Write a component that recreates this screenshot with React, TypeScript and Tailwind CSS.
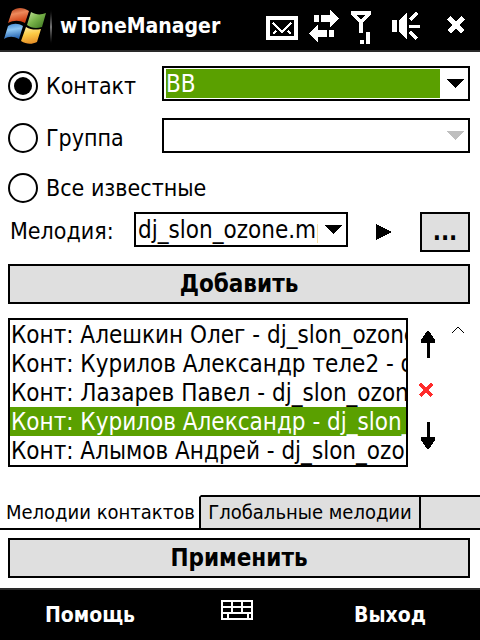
import { useState } from 'react';

const melodies = [
    'Конт: Алешкин Олег - dj_slon_ozone.mp3',
    'Конт: Курилов Александр теле2 - dj_slon_ozone.mp3',
    'Конт: Лазарев Павел - dj_slon_ozone.mp3',
    'Конт: Курилов Александр - dj_slon_ozone.mp3',
    'Конт: Алымов Андрей - dj_slon_ozone.mp3',
];

const targets = [
    { id: 'contact', label: 'Контакт' },
    { id: 'group', label: 'Группа' },
    { id: 'all', label: 'Все известные' },
];

const WindowsLogo: React.FC = () => (
    <svg width="44" height="38" viewBox="0 0 44 38" aria-hidden="true">
        <defs>
            <linearGradient id="red" x1="0" y1="0" x2="0.3" y2="1">
                <stop offset="0" stopColor="#a8320f" />
                <stop offset="0.45" stopColor="#ee8a5c" />
                <stop offset="1" stopColor="#cf3f12" />
            </linearGradient>
            <linearGradient id="green" x1="0" y1="0" x2="1" y2="1">
                <stop offset="0" stopColor="#c4e39b" />
                <stop offset="0.45" stopColor="#79b34a" />
                <stop offset="1" stopColor="#356f1b" />
            </linearGradient>
            <linearGradient id="blue" x1="0" y1="0" x2="0.2" y2="1">
                <stop offset="0" stopColor="#3f86cf" />
                <stop offset="0.45" stopColor="#8cc5f2" />
                <stop offset="1" stopColor="#2a68b3" />
            </linearGradient>
            <linearGradient id="yellow" x1="0" y1="0" x2="0.2" y2="1">
                <stop offset="0" stopColor="#fff2a8" />
                <stop offset="0.5" stopColor="#fccb45" />
                <stop offset="1" stopColor="#e8942a" />
            </linearGradient>
        </defs>
        <path d="M8 3 C13 -1 19 -1 25 3 L21 15 C15 12 10 12 4 15 Z" fill="url(#red)" />
        <path d="M27 4 C32 7 37 7 42 5 L38 19 C32 21 27 20 23 17 Z" fill="url(#green)" />
        <path d="M4 18 C9 15 14 15 19 18 L15 31 C9 28 5 28 0 31 Z" fill="url(#blue)" />
        <path d="M22 19 C27 22 32 22 37 21 L33 34 C27 37 22 36 17 33 Z" fill="url(#yellow)" />
    </svg>
);

const StatusIcons: React.FC = () => (
    <div className="flex gap-[11px] text-white">
        <svg width="32" height="50" fill="none" stroke="currentColor" shapeRendering="crispEdges" aria-label="Сообщения">
            <rect x="2" y="18" width="28" height="20" strokeWidth="4" />
            <path d="M7 23 L16 32 L25 23 M7 34 L10 31 M25 34 L22 31" strokeWidth="2" />
        </svg>
        <svg width="30" height="50" fill="currentColor" shapeRendering="crispEdges" aria-label="Передача данных">
            <path d="M5 15H10V22H5Z M12 15H21V10L30 18V19L21 27V22H12Z" />
            <path d="M20 30H25V37H20Z M18 30H9V25L0 33V34L9 42V37H18Z" />
        </svg>
        <svg width="31" height="50" fill="currentColor" shapeRendering="crispEdges" aria-label="Сигнал">
            <path fillRule="evenodd" d="M1 11H21V14L13 23V33H9V23L1 14Z M6 15L11 19L16 15Z" />
            <path d="M10 40H14V44H10Z M16 32H20V44H16Z" />
        </svg>
        <svg width="44" height="50" fill="currentColor" shapeRendering="crispEdges" aria-label="Звук">
            <path d="M0 20H5V32H0Z M7 20L15 13V39L7 32Z M17 25H28V28H17Z" />
            <path d="M18 20L25 13M18 32L25 39" stroke="currentColor" strokeWidth="3" />
        </svg>
    </div>
);

const UpArrow: React.FC = () => (
    <svg width="14" height="27" viewBox="0 0 14 27" shapeRendering="crispEdges" aria-hidden="true">
        <path d="M6 0H8L14 9V12H9V27H6V12H0V9Z" />
    </svg>
);

const Triangle: React.FC<{ className: string }> = ({ className }) => (
    <svg width="18" height="9" viewBox="0 0 18 9" className={className} fill="currentColor" shapeRendering="crispEdges" aria-hidden="true">
        <path d="M0 0H18L9 9Z" />
    </svg>
);

const App: React.FC = () => {
    const [target, setTarget] = useState('contact');
    const [selected, setSelected] = useState(melodies[3]);
    const [tab, setTab] = useState(0);

    return (
        <div className="min-h-screen flex flex-col bg-white text-black text-2xl/[29px] font-['DejaVu_Sans_Condensed','DejaVu_Sans',sans-serif] [font-stretch:condensed]">
            <header className="flex h-[52px] items-start border-b-2 border-[#2a2a2a] bg-black pl-1 pr-[15px]">
                <div className="mt-2 flex">
                    <WindowsLogo />
                    <span className="ml-[2px] h-[38px] w-[2px] bg-linear-to-b from-black via-[#777777] to-black" />
                </div>
                <h1 className="ml-2 flex-1 text-[21px]/[52px] font-bold text-white">wToneManager</h1>
                <StatusIcons />
                <button type="button" aria-label="Закрыть" className="ml-[11px] text-white">
                    <svg width="18" height="50" stroke="currentColor" strokeWidth="5" shapeRendering="crispEdges">
                        <path d="M2 18L16 32M16 18L2 32" />
                    </svg>
                </button>
            </header>

            <main className="flex-1 pt-[14px]">
                <div className="pl-2 pr-[10px]">
                    <div className="grid grid-cols-[154px_1fr] gap-y-[17px]">
                        {targets.map(({ id, label }) => (
                            <div key={id} className="contents">
                                <label className={id === 'all' ? 'col-span-2 flex h-[33px] items-end gap-2 text-[23px]/[30px]' : 'flex h-[35px] items-end gap-2 text-[23px]/[30px]'}>
                                    <input
                                        type="radio"
                                        name="target"
                                        checked={target === id}
                                        onChange={() => setTarget(id)}
                                        className="size-[30px] appearance-none rounded-full border-2 border-black p-1 bg-clip-content checked:bg-black"
                                    />
                                    {label}
                                </label>
                                {id === 'contact' && (
                                    <div className="relative">
                                        <select aria-label="Контакт" className="h-[35px] w-full appearance-none border-2 border-black bg-[#5aa000] bg-clip-content py-px pl-[2px] pr-7 leading-[31px] text-white">
                                            <option>BB</option>
                                        </select>
                                        <Triangle className="pointer-events-none absolute right-[6px] top-[13px]" />
                                    </div>
                                )}
                                {id === 'group' && (
                                    <div className="relative">
                                        <select aria-label="Группа" disabled className="h-[35px] w-full appearance-none border-2 border-black disabled:opacity-100" />
                                        <Triangle className="pointer-events-none absolute right-[6px] top-[13px] text-[#bfbfbf]" />
                                    </div>
                                )}
                            </div>
                        ))}
                    </div>

                    <div className="mt-[9px] flex items-start">
                        <label htmlFor="melody" className="w-[126px] pl-[2px] pt-1 text-[23px]/[30px]">Мелодия:</label>
                        <div className="relative w-[214px]">
                            <select id="melody" className="h-[35px] w-full appearance-none border-2 border-black py-px pl-[2px] pr-7 leading-[31px]">
                                <option>dj_slon_ozone.mp3</option>
                            </select>
                            <Triangle className="pointer-events-none absolute right-[6px] top-[13px]" />
                        </div>
                        <button type="button" aria-label="Воспроизвести" className="flex h-10 flex-1 items-center justify-center">
                            <svg width="16" height="16" shapeRendering="crispEdges">
                                <path d="M0 0L16 8L0 16Z" />
                            </svg>
                        </button>
                        <button type="button" aria-label="Обзор" className="h-10 w-[50px] border-2 border-black bg-[#dfdfdf] font-bold">...</button>
                    </div>

                    <button type="button" className="mt-3 h-10 w-full border-2 border-black bg-[#dfdfdf] pt-px font-bold">Добавить</button>

                    <div className="mt-[14px] flex h-[149px]">
                        <div role="listbox" aria-label="Мелодии контактов" className="min-w-0 flex-1 overflow-hidden border-2 border-black">
                            {melodies.map((item) => (
                                <button
                                    key={item}
                                    type="button"
                                    role="option"
                                    aria-selected={selected === item}
                                    onClick={() => setSelected(item)}
                                    className="block h-[29px] w-full overflow-hidden whitespace-nowrap pl-px pt-px text-left leading-[29px] aria-selected:bg-[#5aa000] aria-selected:text-white"
                                >
                                    {item}
                                </button>
                            ))}
                        </div>
                        <div className="flex w-10 flex-col items-center justify-between pb-[18px] pt-[13px]">
                            <button type="button" aria-label="Вверх">
                                <UpArrow />
                            </button>
                            <button type="button" aria-label="Удалить" className="mr-1 text-[#ff2b2b]">
                                <svg width="14" height="14" stroke="currentColor" strokeWidth="3" shapeRendering="crispEdges">
                                    <path d="M1 1L13 13M13 1L1 13" />
                                </svg>
                            </button>
                            <button type="button" aria-label="Вниз">
                                <svg width="14" height="27" shapeRendering="crispEdges" aria-hidden="true">
                                    <path d="M6 27H8L14 18V15H9V0H6V15H0V18Z" />
                                </svg>
                            </button>
                        </div>
                        <button type="button" aria-label="Свернуть" className="w-[22px] self-start pl-1 pt-2">
                            <svg width="12" height="8" fill="none" stroke="currentColor" shapeRendering="crispEdges">
                                <path d="M0 7L6 1L12 7" />
                            </svg>
                        </button>
                    </div>
                </div>

                <div role="tablist" className="mt-7 flex h-[35px] text-xl/[31px]">
                    {['Мелодии контактов', 'Глобальные мелодии'].map((label, i) => (
                        <button
                            key={label}
                            type="button"
                            role="tab"
                            aria-selected={tab === i}
                            onClick={() => setTab(i)}
                            className="whitespace-nowrap border-y-2 border-r-2 border-black bg-[#dfdfdf] px-[6px] text-center first:w-[201px] last-of-type:w-[220px] aria-selected:border-t-white aria-selected:bg-white"
                        >
                            {label}
                        </button>
                    ))}
                    <div className="flex-1 border-y-2 border-black bg-[#dfdfdf]" />
                </div>

                <div className="pb-[10px] pl-2 pr-[10px] pt-2">
                    <button type="button" className="h-10 w-full border-2 border-black bg-[#dfdfdf] pt-px font-bold">Применить</button>
                </div>
            </main>

            <footer className="flex h-[52px] items-center border-t-2 border-[#2a2a2a] bg-black text-white">
                <button type="button" className="h-full w-[180px] text-[21px] font-bold">Помощь</button>
                <button type="button" aria-label="Клавиатура" className="flex flex-1 justify-center pb-[10px] pr-[6px]">
                    <svg width="32" height="20" fill="none" stroke="currentColor" strokeWidth="2" shapeRendering="crispEdges">
                        <path d="M1 1H31V19H1Z M1 7H31 M1 13H31 M11 1V13 M21 1V13 M7 13V19 M27 13V19" />
                    </svg>
                </button>
                <button type="button" className="h-full w-[180px] text-[21px] font-bold">Выход</button>
            </footer>
        </div>
    );
};

export default App;
